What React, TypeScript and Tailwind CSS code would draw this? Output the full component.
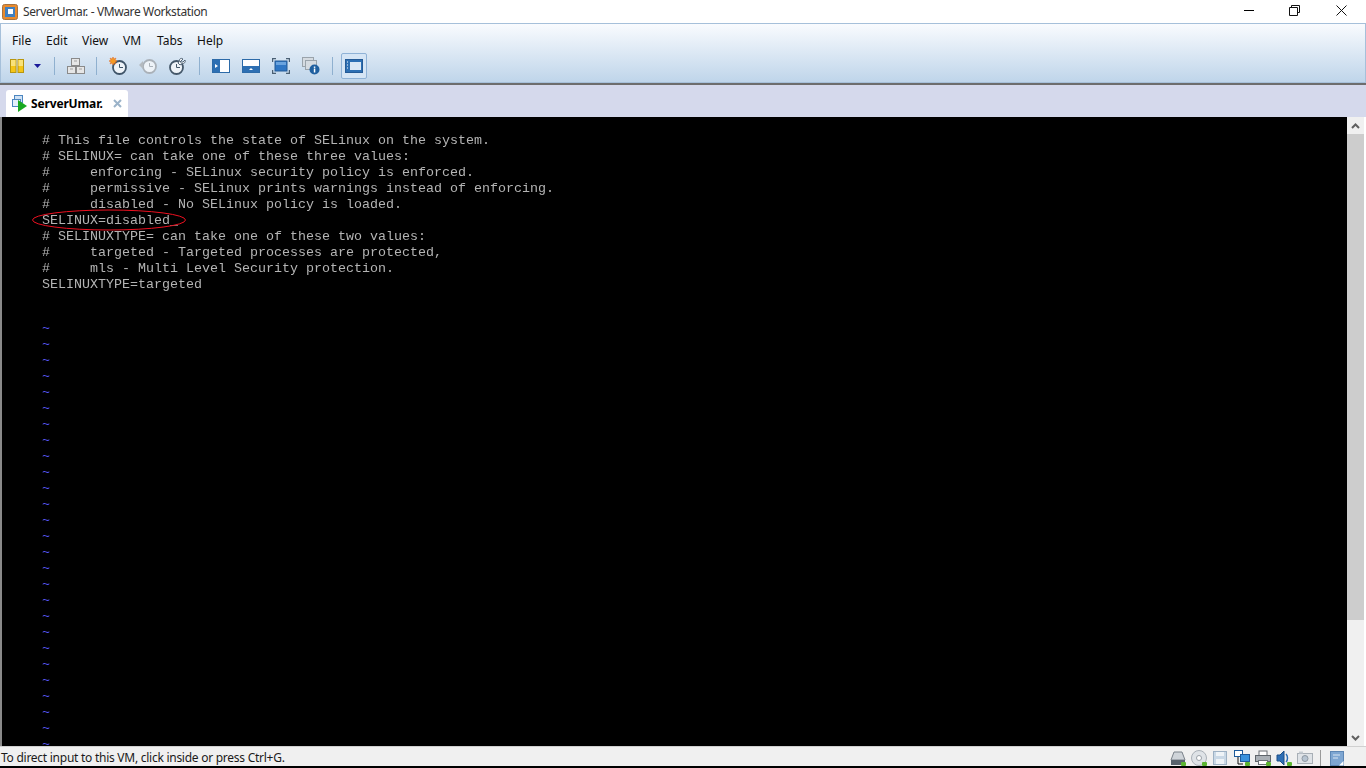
import { ReactNode } from "react";

const consoleLines = [
  "# This file controls the state of SELinux on the system.",
  "# SELINUX= can take one of these three values:",
  "#     enforcing - SELinux security policy is enforced.",
  "#     permissive - SELinux prints warnings instead of enforcing.",
  "#     disabled - No SELinux policy is loaded.",
  "SELINUX=disabled",
  "# SELINUXTYPE= can take one of these two values:",
  "#     targeted - Targeted processes are protected,",
  "#     mls - Multi Level Security protection.",
  "SELINUXTYPE=targeted",
  "",
  "",
];

const tildes = Array.from({ length: 26 }, (_, i) => i);

function Icon({ w = 18, h = 18, className = "", children }: { w?: number; h?: number; className?: string; children: ReactNode }) {
  return (
    <svg width={w} height={h} viewBox={`0 0 ${w} ${h}`} className={`block shrink-0 ${className}`}>
      {children}
    </svg>
  );
}

function Sep({ className = "" }: { className?: string }) {
  return <div className={`h-[18px] w-px shrink-0 bg-[#8fb0cf] ${className}`} />;
}

function Clock({ x, y, r = 6.5, color = "#4a5a6a" }: { x: number; y: number; r?: number; color?: string }) {
  return (
    <g>
      <circle cx={x} cy={y} r={r} fill="#eef3f8" stroke={color} strokeWidth="1.8" />
      <path d={`M${x} ${y - 3.5}V${y}H${x + 3.5}`} fill="none" stroke={color} strokeWidth="1" />
    </g>
  );
}

function Led() {
  return <rect x="11" y="12" width="5" height="4" rx="1" fill="#5cb531" />;
}

export default function App() {
  return (
    <div className="flex h-screen w-[1366px] flex-col overflow-hidden bg-white font-['Noto_Sans',sans-serif] text-[12px] text-[#1a1a1a]">
      {/* Title bar */}
      <div className="flex h-[23px] shrink-0 items-center">
        <svg width="16" height="16" viewBox="0 0 16 16" className="ml-[2px] block shrink-0">
          <rect x="0.5" y="0.5" width="15" height="15" rx="2" fill="#e98a2c" stroke="#a8733f" />
          <rect x="3" y="3" width="10" height="10" fill="#3f7fc0" />
          <rect x="6" y="5" width="5" height="5" fill="#fff" />
        </svg>
        <span className="ml-[5px] text-[12px] tracking-[-0.38px] text-[#333]">ServerUmar. - VMware Workstation</span>
        <div className="-mt-[3px] ml-auto flex items-center">
          <div className="h-px w-[10px] bg-black" />
          <svg width="11" height="11" viewBox="0 0 11 11" className="ml-[35px] block">
            <path d="M2.5 2.5V.5h8v7h-2M.5 2.5h8v8h-8z" fill="none" stroke="#111" />
          </svg>
          <svg width="11" height="11" viewBox="0 0 11 11" className="ml-[36px] mr-[19px] block">
            <path d="M.5.5l10 10M10.5.5l-10 10" fill="none" stroke="#111" />
          </svg>
        </div>
      </div>

      {/* Menu and toolbar */}
      <div className="h-[60px] shrink-0 border border-[#a6c0da] bg-gradient-to-b from-[#f9fbfe] to-[#bfd5ea]">
        <div className="flex h-[28px] items-center pl-[11px] pt-[5px] text-[12px] text-[#111]">
          <span className="w-[34px]">File</span>
          <span className="w-[36px]">Edit</span>
          <span className="w-[41px]">View</span>
          <span className="w-[34px]">VM</span>
          <span className="w-[40px]">Tabs</span>
          <span>Help</span>
        </div>
        <div className="flex h-[28px] items-center pl-[9px]">
          <Icon w={14} h={14}>
            <rect x="0.5" y="0.5" width="5.5" height="13" fill="#f5c518" stroke="#b8960f" />
            <rect x="8" y="0.5" width="5.5" height="13" fill="#f5c518" stroke="#b8960f" />
            <rect x="1" y="1" width="4.5" height="6" fill="#f9e27a" />
            <rect x="8.500" y="1" width="4.5" height="6" fill="#f9e27a" />
          </Icon>
          <Icon w={7} h={4} className="ml-[10px]">
            <path d="M0 0h7L3.5 4z" fill="#1a1a9a" />
          </Icon>
          <Sep className="ml-[13px]" />
          <Icon h={16} className="ml-[12px]">
            <g fill="#e6e6e6" stroke="#8a8a8a">
              <rect x="4.500" y="0.500" width="8" height="7" />
              <rect x="0.500" y="8.500" width="8" height="7" />
              <rect x="9.500" y="8.500" width="8" height="7" />
            </g>
            <path d="M7 3h3M3 11h3M12 11h3" stroke="#a0a0a0" />
          </Icon>
          <Sep className="ml-[11px]" />
          <Icon className="ml-[12px]">
            <Clock x={10.500} y={10.500} color="#3f5468" />
            <path d="M4 0l1 2 2-1-1 2 2 1-2 1 1 2-2-1-1 2-1-2-2 1 1-2-2-1 2-1-1-2 2 1z" fill="#f59a23" stroke="#e2641a" strokeWidth="0.5" />
          </Icon>
          <Icon className="ml-[12px]">
            <Clock x={10.500} y={9.500} color="#aab1b8" />
            <path d="M0 8l4-4v8z" fill="#b4babf" />
          </Icon>
          <Icon className="ml-[12px]">
            <Clock x={7.500} y={10.500} color="#45586a" />
            <path d="M11 5l3-3c-2-1.500-4 0-3.500 2L9 6l2 2 2-1.500c2 .5 4-1.500 3-3.500l-2 2z" fill="#f2f5f8" stroke="#45586a" strokeWidth="0.9" />
          </Icon>
          <Sep className="ml-[12px]" />
          <Icon h={14} className="ml-[12px]">
            <rect x="0.5" y="0.5" width="17" height="13" fill="#fff" stroke="#2c6aa8" />
            <rect x="1" y="1" width="7" height="12" fill="#2d6fb3" />
            <path d="M3 5l3 2-3 2z" fill="#fff" />
          </Icon>
          <Icon h={14} className="ml-[12px]">
            <rect x="0.5" y="0.5" width="17" height="13" fill="#fff" stroke="#2c6aa8" />
            <rect x="1" y="7" width="16" height="6" fill="#2d6fb3" />
            <path d="M7 11l2-2 2 2z" fill="#fff" />
          </Icon>
          <Icon className="ml-[12px]" h={16}>
            <path d="M.5 4V.5H4M14 .5h3.500V4M.5 12v3.500H4M14 15.500h3.500V12" fill="none" stroke="#4a5f73" strokeWidth="1.4" />
            <rect x="3" y="3" width="12" height="10" fill="#2f76c4" stroke="#245a96" />
            <rect x="4" y="4" width="10" height="3" fill="#6aa3de" />
          </Icon>
          <Icon className="ml-[12px]">
            <rect x="0.5" y="0.500" width="11" height="9" fill="#d5dbe1" stroke="#9aa3ab" />
            <rect x="3.500" y="3.500" width="11" height="9" fill="#d5dbe1" stroke="#9aa3ab" />
            <circle cx="12.500" cy="12.500" r="5" fill="#1f5f9f" />
            <rect x="11.800" y="11.500" width="1.500" height="4" fill="#fff" />
            <rect x="11.800" y="9.500" width="1.500" height="1.400" fill="#fff" />
          </Icon>
          <Sep className="ml-[12px]" />
          <div className="ml-[8px] flex h-[26px] w-[26px] shrink-0 items-center justify-center rounded-[2px] border border-[#8fb2d6] bg-[#d5e5f5]">
            <Icon h={14}>
              <rect x="0.500" y="0.500" width="17" height="13" fill="#2d6fb3" stroke="#245a96" />
              <rect x="5" y="3" width="11" height="8" fill="#dbe8f5" />
              <path d="M2 3h1M2 6h1M2 9h1" stroke="#fff" />
            </Icon>
          </div>
        </div>
      </div>

      {/* Tab strip */}
      <div className="flex h-[34px] shrink-0 items-end border-t-2 border-[#6d6d6d] bg-[#d5d9ec] pl-[6px]">
        <div className="flex h-[27px] w-[122px] items-center rounded-t-[3px] bg-white pl-[6px]">
          <svg width="16" height="17" viewBox="0 0 16 17" className="block shrink-0">
            <rect x="2.500" y="0.500" width="8" height="7" fill="#cfe2f5" stroke="#4c86c0" />
            <rect x="0.500" y="4.500" width="8" height="7" fill="#e3effa" stroke="#4c86c0" />
            <path d="M6 5l9 6-9 6z" fill="#18a820" />
          </svg>
          <span className="ml-[3px] text-[12px] font-bold tracking-[-0.15px] text-black">ServerUmar.</span>
          <svg width="9" height="9" viewBox="0 0 9 9" className="ml-[10px] block shrink-0">
            <path d="M1 1l7 7M8 1l-7 7" fill="none" stroke="#9bb3c9" strokeWidth="2" />
          </svg>
        </div>
      </div>

      {/* Console */}
      <div className="flex min-h-0 flex-1">
        <div className="w-[2px] shrink-0 bg-[#8a8a8a]" />
        <div className="relative min-w-0 flex-1 overflow-hidden bg-black">
          <div className="h-full overflow-hidden pl-[40px] pt-[16px] font-['Liberation_Mono',monospace] text-[13.33px] leading-[16px] text-[#b4b4b4] will-change-transform">
            {consoleLines.map((line, i) => (
              <div key={i} className="h-[16px] whitespace-pre">
                {line}
                {line === "SELINUX=disabled" && <span>_</span>}
              </div>
            ))}
            <div className="-mt-px">
              {tildes.map((i) => (
                <div key={i} className="h-[16px] leading-[10px] text-[#5555ff]">~</div>
              ))}
              <div className="h-[6px] overflow-hidden leading-[10px] text-[#5555ff]">~</div>
            </div>
          </div>
          <svg width="156" height="24" viewBox="0 0 156 24" className="absolute left-[29px] top-[91px] block">
            <ellipse cx="78" cy="12" rx="76.500" ry="10" fill="none" stroke="#ee1020" strokeWidth="1" />
          </svg>
        </div>
        <div className="flex w-[17px] shrink-0 flex-col bg-[#f0f0f0]">
          <div className="flex h-[17px] items-center justify-center">
            <svg width="9" height="6" viewBox="0 0 9 6" className="block">
              <path d="M1 5l3.500-3.500L8 5" fill="none" stroke="#606060" strokeWidth="2" />
            </svg>
          </div>
          <div className="h-[486px] bg-[#cdcdcd]" />
          <div className="flex-1" />
          <div className="flex h-[17px] items-center justify-center">
            <svg width="9" height="6" viewBox="0 0 9 6" className="block">
              <path d="M1 1l3.500 3.500L8 1" fill="none" stroke="#606060" strokeWidth="2" />
            </svg>
          </div>
        </div>
        <div className="w-[2px] shrink-0 bg-white" />
      </div>

      {/* Status bar */}
      <div className="flex h-[20px] shrink-0 items-center border-t border-[#d0d0d0] bg-[#f0f0f0] pt-[3px] text-[12px] text-[#1a1a1a]">
        <span className="ml-[1px] tracking-[-0.26px]">To direct input to this VM, click inside or press Ctrl+G.</span>
        <div className="ml-auto flex items-center pr-[22px]">
          <Icon w={16} h={16}>
            <path d="M4 2h8l3 8H1z" fill="#cfd4d9" stroke="#7a828a" />
            <rect x="1" y="10" width="14" height="5" fill="#59636d" />
            <Led />
          </Icon>
          <Icon w={16} h={16} className="ml-[5px]">
            <circle cx="8" cy="8" r="7.500" fill="#dfe3e7" stroke="#a9b0b7" />
            <circle cx="8" cy="8" r="2.500" fill="#fff" stroke="#9aa1a8" />
            <Led />
          </Icon>
          <Icon w={14} h={16} className="ml-[6px]">
            <rect x="0.500" y="1.500" width="13" height="13" fill="#c9d8e6" stroke="#9db1c4" />
            <rect x="3" y="2" width="8" height="4" fill="#eef3f7" />
            <rect x="3" y="9" width="8" height="5" fill="#eef3f7" />
          </Icon>
          <Icon w={16} h={16} className="ml-[7px]">
            <rect x="0.500" y="0.500" width="8" height="6" fill="#fff" stroke="#1d5a9a" />
            <rect x="6.500" y="4.500" width="9" height="7" fill="#3a92dd" stroke="#1d5a9a" />
            <path d="M4 7v7h5" fill="none" stroke="#111" />
            <Led />
          </Icon>
          <Icon w={16} h={16} className="ml-[5px]">
            <rect x="4" y="1" width="8" height="5" fill="#fff" stroke="#6a6f75" />
            <rect x="0.500" y="5.500" width="15" height="6" fill="#aab0b6" stroke="#5f656b" />
            <rect x="3.500" y="10.500" width="9" height="4" fill="#fff" stroke="#6a6f75" />
            <Led />
          </Icon>
          <Icon w={16} h={16} className="ml-[5px]">
            <path d="M1 5h3l4-4v14l-4-4H1z" fill="#2e6fb5" stroke="#1d4f86" />
            <path d="M10 4c2 2 2 6 0 8" fill="none" stroke="#2e6fb5" strokeWidth="1.500" />
            <Led />
          </Icon>
          <Icon w={16} h={14} className="ml-[5px]">
            <rect x="0.500" y="2.500" width="15" height="10" fill="#dfe3e7" stroke="#a8afb6" />
            <circle cx="8" cy="7.500" r="3" fill="#b7c4d1" stroke="#8e98a2" />
            <rect x="2" y="0.500" width="4" height="2" fill="#c5cbd1" />
          </Icon>
          <div className="ml-[7px] h-[17px] w-px bg-[#9a9a9a]" />
          <Icon w={14} h={15} className="ml-[9px]">
            <rect x="0.500" y="0.500" width="13" height="14" fill="#7ea6d2" stroke="#5d86b4" />
            <path d="M3 4h7M3 7h5" stroke="#dbe6f2" />
            <path d="M9 14.500l4.500-4.500v4.500z" fill="#fff" />
          </Icon>
        </div>
      </div>
      <div className="h-[2px] shrink-0 bg-black" />
    </div>
  );
}
